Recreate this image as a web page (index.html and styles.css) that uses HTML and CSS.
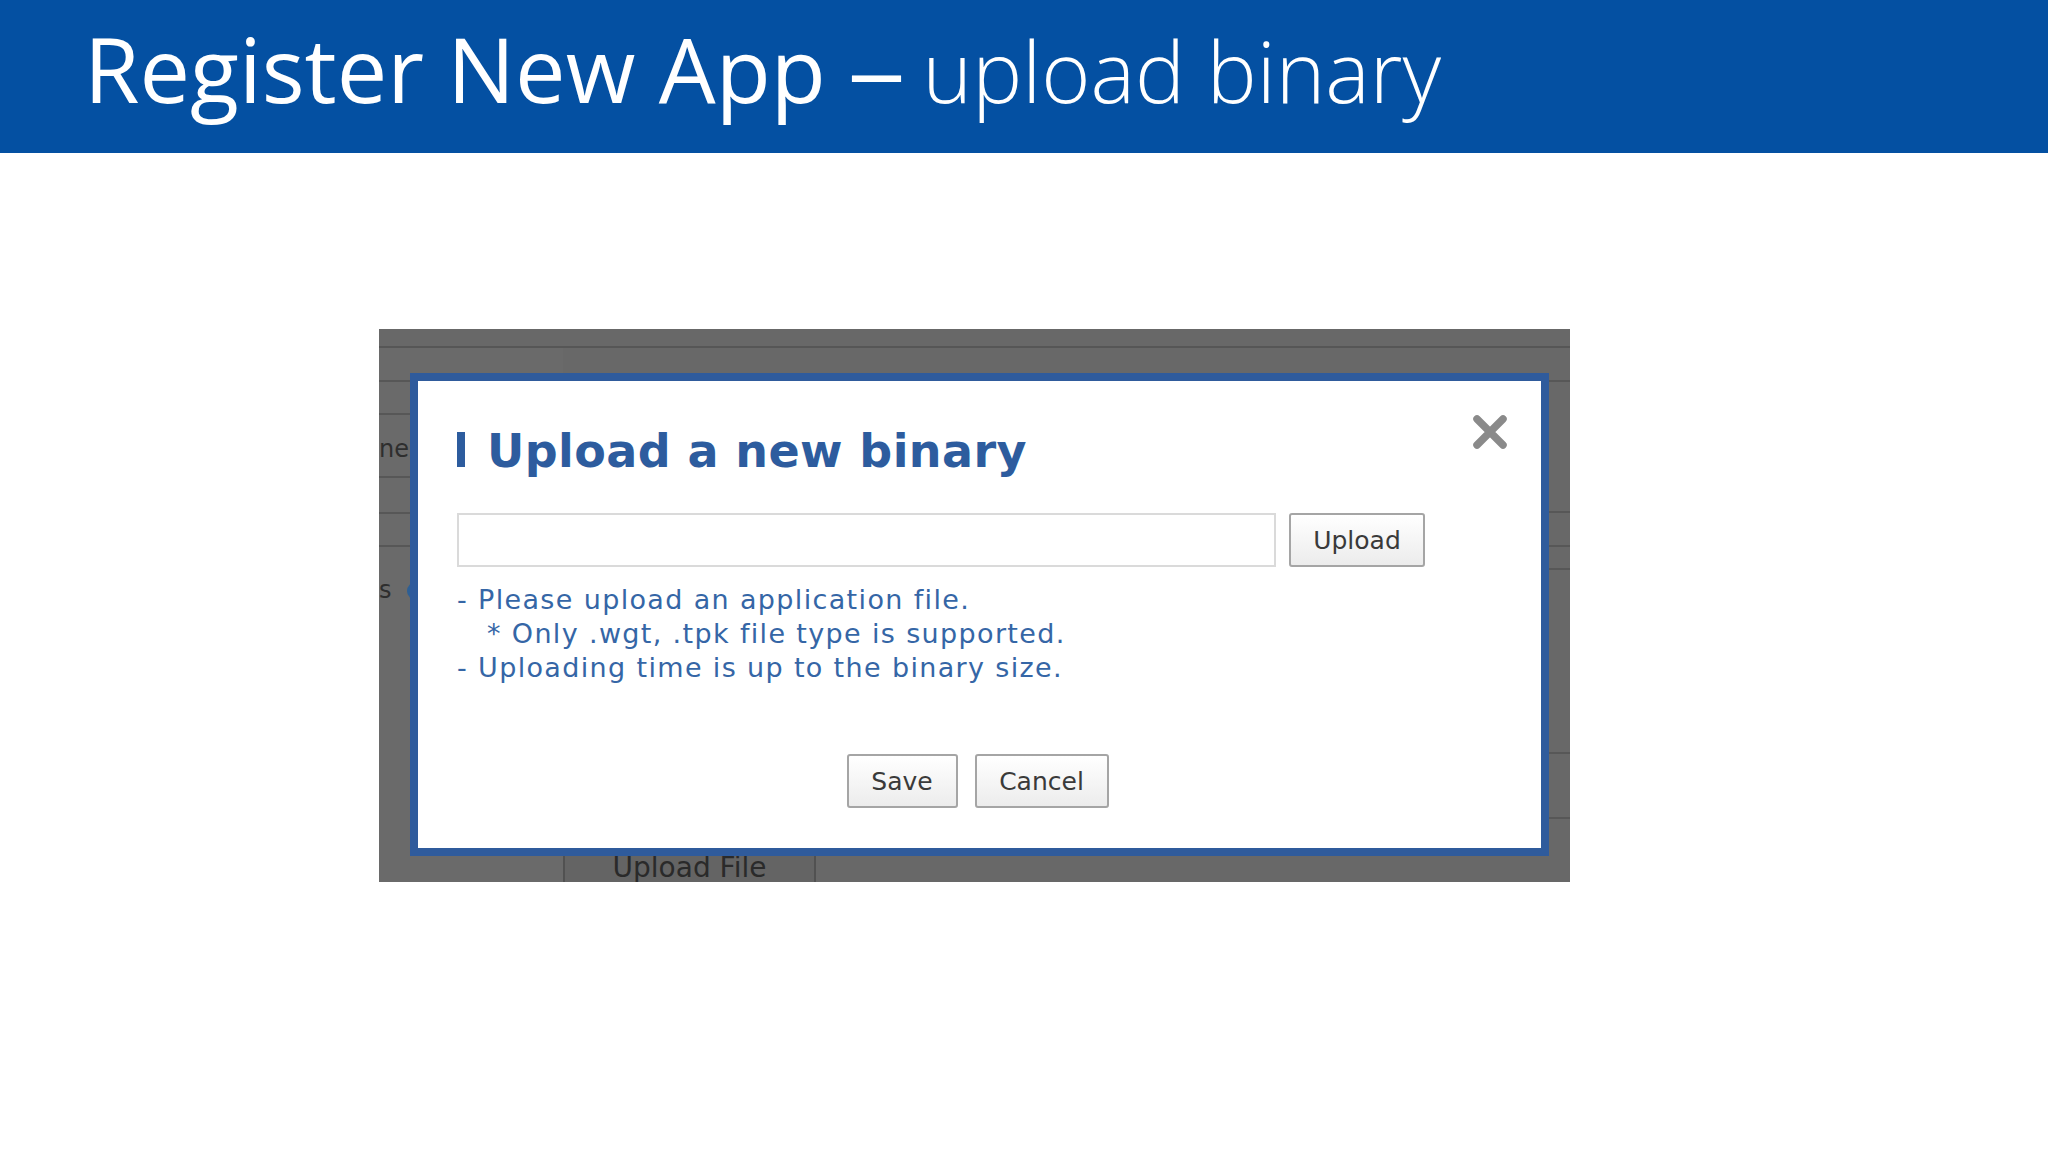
FILE: index.html
```html
<!DOCTYPE html>
<html lang="en">
<head>
  <meta charset="UTF-8" />
  <meta name="viewport" content="width=device-width, initial-scale=1.0"/>
  <title>Register New App – upload binary</title>
  <link rel="stylesheet" href="styles.css">
</head>
<body>
  <header class="slide-head">
    <h1>Register New App <span class="dash">–</span> <span class="sub">upload binary</span></h1>
  </header>

  <main>
    <div class="shot">
      <div class="backdrop">
        <div class="top-strip"></div>
        <div class="cols">
          <div class="col-left">
            <div class="row h34"></div>
            <div class="row h33"></div>
            <div class="row h63 label">ne</div>
            <div class="row h36"></div>
            <div class="row h33"></div>
            <div class="label-s">s<span class="dot"></span></div>
          </div>
          <div class="col-mid">
            <div class="cell">Upload File</div>
          </div>
          <div class="col-right">
            <div class="row h34"></div>
            <div class="row h131"></div>
            <div class="row h34"></div>
            <div class="row h23"></div>
            <div class="row h184"></div>
            <div class="row h65"></div>
          </div>
        </div>
      </div>

      <div class="dialog">
        <button class="close" aria-label="Close">
          <svg width="36" height="36" viewBox="0 0 36 36">
            <path d="M5 5 L31 31 M31 5 L5 31" stroke="#8a8a8a" stroke-width="7.5" stroke-linecap="round"/>
          </svg>
        </button>
        <h2 class="dialog-title"><span class="bar"></span>Upload a new binary</h2>

        <div class="file-row">
          <input type="text" class="file-input" />
          <button class="btn btn-upload">Upload</button>
        </div>

        <div class="help">
          <p>- Please upload an application file.</p>
          <p class="indent">* Only .wgt, .tpk file type is supported.</p>
          <p>- Uploading time is up to the binary size.</p>
        </div>

        <div class="actions">
          <button class="btn btn-save">Save</button>
          <button class="btn btn-cancel">Cancel</button>
        </div>
      </div>
    </div>
  </main>
</body>
</html>
```

FILE: styles.css
```css
body {
  margin: 0;
  background: #fff;
  font-family: 'Open Sans', 'Noto Sans', sans-serif;
}

.slide-head {
  height: 153px;
  background: #0450a2;
  box-sizing: border-box;
  padding: 23px 0 0 84px;
}

.slide-head h1 {
  margin: 0;
  font-size: 90px;
  line-height: 1;
  font-weight: 400;
  color: #fff;
  white-space: nowrap;
}

.slide-head .dash {
  display: inline-block;
  margin-left: 5px;
  transform: scaleX(1.3);
}

.slide-head .sub {
  font-size: 84px;
  font-weight: 300;
}

/* screenshot of the store page */
.shot {
  position: relative;
  width: 1191px;
  height: 553px;
  margin: 176px 0 0 379px;
  background: #686868;
  overflow: hidden;
}

.backdrop {
  height: 100%;
  display: flex;
  flex-direction: column;
}

.top-strip {
  height: 17px;
  border-bottom: 2px solid #565656;
  flex: none;
}

.cols {
  flex: 1;
  display: flex;
}

.col-left {
  width: 184px;
  background: #6a6a6a;
}

.col-mid {
  flex: 1;
  display: flex;
  flex-direction: column;
  justify-content: flex-end;
}

.col-right {
  width: 200px;
}

.row {
  box-sizing: border-box;
  border-bottom: 2px solid #575757;
}

.h23 { height: 23px; }
.h33 { height: 33px; }
.h34 { height: 34px; }
.h36 { height: 36px; }
.h63 { height: 63px; }
.h65 { height: 65px; }
.h131 { height: 131px; }
.h184 { height: 184px; }

.label,
.label-s {
  font-family: 'DejaVu Sans', sans-serif;
  font-size: 24px;
  line-height: 24px;
  color: #2e2e2e;
}

.label {
  padding-top: 22px;
}

.label-s {
  padding-top: 31px;
  display: flex;
  align-items: flex-start;
}

.dot {
  width: 18px;
  height: 18px;
  border-radius: 50%;
  background: #2d5f95;
  margin: 4px 0 0 15px;
}

.cell {
  width: 253px;
  height: 40px;
  box-sizing: border-box;
  padding-top: 6px;
  border-left: 2px solid #515151;
  border-right: 2px solid #515151;
  background: #646464;
  font-family: 'DejaVu Sans', sans-serif;
  font-size: 28px;
  line-height: 40px;
  text-align: center;
  color: #2a2a2a;
}

/* modal */
.dialog {
  position: absolute;
  left: 31px;
  top: 44px;
  width: 1139px;
  height: 483px;
  box-sizing: border-box;
  border: 8px solid #2f5b9c;
  background: #fff;
  padding: 47px 39px 0;
  font-family: 'DejaVu Sans', sans-serif;
}

.close {
  position: absolute;
  top: 33px;
  right: 33px;
  padding: 0;
  border: none;
  background: none;
  line-height: 0;
}

.dialog-title {
  display: flex;
  align-items: center;
  margin: 0;
  font-size: 46px;
  line-height: 46px;
  font-weight: 700;
  letter-spacing: 0.4px;
  color: #2d5c9e;
}

.dialog-title .bar {
  width: 8px;
  height: 35px;
  margin: -4px 22px 0 0;
  background: #2d5c9e;
}

.file-row {
  display: flex;
  gap: 13px;
  margin-top: 39px;
}

.file-input {
  width: 819px;
  height: 54px;
  box-sizing: border-box;
  margin: 0;
  border: 2px solid #dadada;
  background: #fff;
}

.btn {
  height: 54px;
  box-sizing: border-box;
  border: 2px solid #a5a5a5;
  border-radius: 3px;
  background: linear-gradient(#ffffff, #ececec);
  font-family: 'DejaVu Sans', sans-serif;
  font-size: 25px;
  color: #3a3a3a;
  padding: 0;
}

.btn-upload { width: 136px; }
.btn-save { width: 111px; }
.btn-cancel { width: 134px; }

.help {
  margin-top: 16px;
  font-size: 27px;
  line-height: 34px;
  letter-spacing: 1.35px;
  color: #3566a6;
}

.help p {
  margin: 0;
}

.help .indent {
  padding-left: 30px;
}

.actions {
  display: flex;
  justify-content: center;
  gap: 17px;
  margin-top: 69px;
  padding-right: 4px;
}
```
